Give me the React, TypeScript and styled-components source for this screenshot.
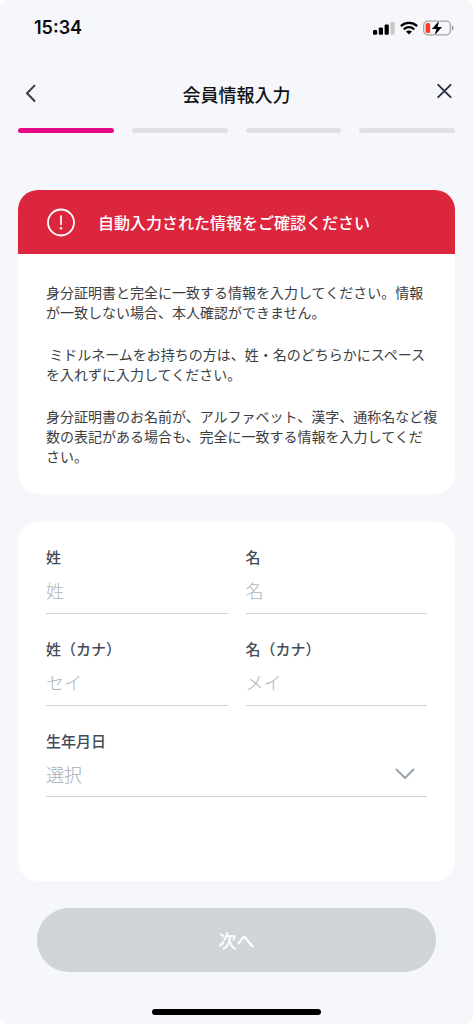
import React from "react";
import styled, { createGlobalStyle } from "styled-components";

const GlobalStyle = createGlobalStyle`
  *, *::before, *::after { box-sizing: border-box; }
  body {
    margin: 0;
    background: #ffffff;
    font-family: "Noto Sans CJK JP", "Noto Sans", sans-serif;
  }
`;

const Screen = styled.div`
  display: flex;
  flex-direction: column;
  min-height: 100vh;
  border-radius: 8px;
  background: #f6f7fa;
`;

const StatusBar = styled.div`
  display: flex;
  align-items: center;
  justify-content: space-between;
  height: 56px;
  padding: 0 19px 0 34px;
`;

const Clock = styled.time`
  font-family: Inter, "Liberation Sans", sans-serif;
  font-size: 18px;
  font-weight: 600;
  line-height: 24px;
  color: #0b0c0e;
`;

const StatusIcons = styled.div`
  display: flex;
  align-items: center;
  gap: 5px;

  svg { display: block; }
`;

const Header = styled.header`
  display: grid;
  grid-template-columns: 24px 1fr 24px;
  align-items: center;
  height: 72px;
  padding: 0 18px;
`;

const Title = styled.h1`
  margin: 0;
  padding-top: 4px;
  font-size: 18px;
  font-weight: 500;
  line-height: 28px;
  text-align: center;
  color: #111214;
`;

const IconButton = styled.button`
  display: flex;
  align-items: center;
  justify-content: center;
  width: 24px;
  height: 24px;
  padding: 0;
  border: 0;
  background: none;
  color: #2c3040;
  cursor: pointer;
`;

const Steps = styled.div`
  display: flex;
  gap: 18px;
  padding: 0 18px;
`;

const Step = styled.span<{ $active?: boolean }>`
  flex: 1;
  height: 5px;
  border-radius: 3px;
  background: ${(p) => (p.$active ? "#e60a84" : "#dfe0e3")};
`;

const Main = styled.main`
  display: flex;
  flex-direction: column;
  gap: 28px;
  padding: 57px 18px 0;
`;

const Notice = styled.section`
  border-radius: 20px;
  background: linear-gradient(#dc263d 64px, #f8dfe3 64px);
`;

const NoticeHead = styled.div`
  display: flex;
  align-items: center;
  gap: 23px;
  height: 64px;
  padding: 0 28px;
  color: #ffffff;
`;

const NoticeTitle = styled.h2`
  margin: 0;
  font-size: 16px;
  font-weight: 500;
  line-height: 24px;
`;

const NoticeBody = styled.div`
  display: flex;
  flex-direction: column;
  gap: 22px;
  padding: 28px 16px 28px 28px;
  border-radius: 0 0 20px 20px;
  background: #ffffff;
`;

const NoticeText = styled.p`
  margin: 0;
  font-size: 14px;
  line-height: 20px;
  white-space: pre-wrap;
  color: #3d3d3f;
`;

const FormCard = styled.form`
  display: grid;
  grid-template-columns: 1fr 1fr;
  gap: 25px 18px;
  padding: 25px 28px 84px;
  border-radius: 20px;
  background: #ffffff;
`;

const Field = styled.div<{ $wide?: boolean }>`
  display: flex;
  flex-direction: column;
  min-width: 0;
  grid-column: ${(p) => (p.$wide ? "1 / -1" : "auto")};
`;

const Label = styled.label`
  font-size: 15px;
  font-weight: 500;
  line-height: 20px;
  color: #444b57;
`;

const TextInput = styled.input`
  width: 100%;
  height: 47px;
  padding: 0;
  border: 0;
  border-bottom: 1px solid #cfd4d9;
  border-radius: 0;
  outline: 0;
  background: transparent;
  font-family: inherit;
  font-size: 18px;
  font-weight: 300;
  color: #444b57;

  &::placeholder { color: #adb5bc; opacity: 1; }
`;

const SelectBox = styled.div`
  display: grid;
  align-items: center;
  border-bottom: 1px solid #cfd4d9;

  > * { grid-area: 1 / 1; }

  svg {
    justify-self: end;
    margin-right: 12px;
    pointer-events: none;
  }
`;

const Select = styled.select`
  width: 100%;
  height: 45px;
  padding: 0;
  border: 0;
  outline: 0;
  appearance: none;
  background: transparent;
  font-family: inherit;
  font-size: 18px;
  font-weight: 300;
  color: #a3acb4;
`;

const Footer = styled.footer`
  display: flex;
  flex-direction: column;
  align-items: center;
  gap: 37px;
  padding: 27px 37px 9px;
`;

const NextButton = styled.button`
  width: 100%;
  height: 64px;
  padding: 0;
  border: 0;
  border-radius: 32px;
  background: #cfd4d8;
  font-family: inherit;
  font-size: 18px;
  font-weight: 500;
  color: #ffffff;
`;

const HomeIndicator = styled.div`
  width: 36%;
  min-width: 169px;
  height: 6px;
  border-radius: 3px;
  background: #000000;
`;

const SignalIcon = () => (
  <svg width="22" height="14" viewBox="0 0 22 14" aria-hidden="true">
    <rect x="0" y="8.9" width="4.2" height="4.8" rx="1.2" fill="#000" />
    <rect x="5.8" y="6.4" width="4.2" height="7.3" rx="1.2" fill="#000" />
    <rect x="11.6" y="3.6" width="4.2" height="10.1" rx="1.2" fill="#000" />
    <rect x="17.4" y="0.9" width="4.2" height="12.8" rx="1.2" fill="#c8c9cb" />
  </svg>
);

const WifiIcon = () => (
  <svg width="18" height="14" viewBox="0 0 18 14" aria-hidden="true">
    <g fill="none" stroke="#000" strokeWidth="2.3">
      <path d="M0.9 5.1C5.4 0.9 12.6 0.9 17.1 5.1" />
      <path d="M3.8 8.3C6.8 5.5 11.2 5.5 14.2 8.3" />
    </g>
    <path d="M9 13.6L6 10.6C7.7 9.1 10.3 9.1 12 10.6Z" fill="#000" />
  </svg>
);

const BatteryIcon = () => (
  <svg width="31" height="16" viewBox="0 0 31 16" aria-hidden="true">
    <rect x="0.7" y="1.2" width="26.6" height="13.6" rx="4" fill="none" stroke="#a3a4a6" strokeWidth="1.2" />
    <path d="M28.8 5.6V10.4C30 10 30.6 9.2 30.6 8C30.6 6.8 30 6 28.8 5.6Z" fill="#97989a" />
    <rect x="2.6" y="3" width="4.6" height="10" rx="1.6" fill="#ff3b30" />
    <path
      d="M16.2 0.8L8.9 9H13.4L11.6 15.2L19 6.9H14.5Z"
      fill="#000"
      stroke="#f6f7fa"
      strokeWidth="1.2"
      strokeLinejoin="round"
      paintOrder="stroke"
    />
  </svg>
);

const BackIcon = () => (
  <svg width="24" height="24" viewBox="0 0 24 24" aria-hidden="true">
    <path
      d="M16.5 5.6L9 13.3L16.5 21"
      fill="none"
      stroke="#3b3c42"
      strokeWidth="2"
      strokeLinecap="round"
      strokeLinejoin="round"
    />
  </svg>
);

const CloseIcon = () => (
  <svg width="24" height="24" viewBox="0 0 24 24" aria-hidden="true">
    <path
      d="M7.2 4.8L19.6 17.2M19.6 4.8L7.2 17.2"
      fill="none"
      stroke="currentColor"
      strokeWidth="1.9"
      strokeLinecap="round"
    />
  </svg>
);

const AlertIcon = () => (
  <svg width="29" height="29" viewBox="0 0 29 29" aria-hidden="true">
    <circle cx="15" cy="14.5" r="13" fill="none" stroke="currentColor" strokeWidth="1.8" />
    <path d="M15 8V16.4" stroke="currentColor" strokeWidth="1.7" strokeLinecap="round" />
    <circle cx="15" cy="20.3" r="1.2" fill="currentColor" />
  </svg>
);

const ChevronDown = () => (
  <svg width="20" height="12" viewBox="0 0 20 12" aria-hidden="true">
    <path
      d="M1.5 1.5L10 10L18.5 1.5"
      fill="none"
      stroke="#9aa5ad"
      strokeWidth="2.1"
      strokeLinecap="round"
      strokeLinejoin="round"
    />
  </svg>
);

const notices = [
  "身分証明書と完全に一致する情報を入力してください。情報\nが一致しない場合、本人確認ができません。",
  " ミドルネームをお持ちの方は、姓・名のどちらかにスペース\nを入れずに入力してください。",
  "身分証明書のお名前が、アルファベット、漢字、通称名など複\n数の表記がある場合も、完全に一致する情報を入力してくだ\nさい。",
];

const nameFields = [
  { id: "last-name", label: "姓", placeholder: "姓" },
  { id: "first-name", label: "名", placeholder: "名" },
  { id: "last-name-kana", label: "姓（カナ）", placeholder: "セイ" },
  { id: "first-name-kana", label: "名（カナ）", placeholder: "メイ" },
];

export default function App() {
  return (
    <>
      <GlobalStyle />
      <Screen lang="ja">
        <StatusBar>
          <Clock>15:34</Clock>
          <StatusIcons>
            <SignalIcon />
            <WifiIcon />
            <BatteryIcon />
          </StatusIcons>
        </StatusBar>
        <Header>
          <IconButton type="button" aria-label="戻る">
            <BackIcon />
          </IconButton>
          <Title>会員情報入力</Title>
          <IconButton type="button" aria-label="閉じる">
            <CloseIcon />
          </IconButton>
        </Header>
        <Steps>
          <Step $active />
          <Step />
          <Step />
          <Step />
        </Steps>
        <Main>
          <Notice>
            <NoticeHead>
              <AlertIcon />
              <NoticeTitle>自動入力された情報をご確認ください</NoticeTitle>
            </NoticeHead>
            <NoticeBody>
              {notices.map((text) => (
                <NoticeText key={text}>{text}</NoticeText>
              ))}
            </NoticeBody>
          </Notice>
          <FormCard id="member-form">
            {nameFields.map((f) => (
              <Field key={f.id}>
                <Label htmlFor={f.id}>{f.label}</Label>
                <TextInput id={f.id} type="text" placeholder={f.placeholder} />
              </Field>
            ))}
            <Field $wide>
              <Label htmlFor="birthday">生年月日</Label>
              <SelectBox>
                <Select id="birthday" defaultValue="">
                  <option value="">選択</option>
                </Select>
                <ChevronDown />
              </SelectBox>
            </Field>
          </FormCard>
        </Main>
        <Footer>
          <NextButton type="submit" form="member-form" disabled>
            次へ
          </NextButton>
          <HomeIndicator />
        </Footer>
      </Screen>
    </>
  );
}
